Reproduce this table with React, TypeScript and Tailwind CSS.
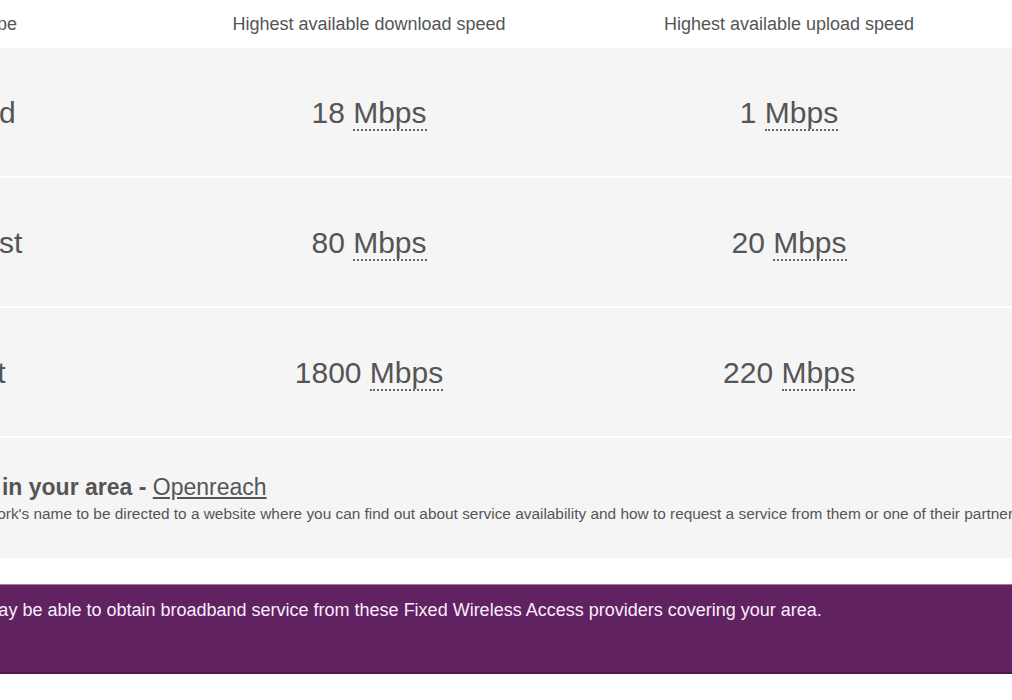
import React from "react";

const rows = [
    { type: "Standard", down: "18", up: "1" },
    { type: "Superfast", down: "80", up: "20" },
    { type: "Ultrafast", down: "1800", up: "220" },
];

const Speed = ({ value }: { value: string }) => (
    <span className="text-[30px] text-[#555]">
        {value}{" "}
        <abbr
            title="Megabits per second"
            className="no-underline inline-block leading-[32px] border-b-2 border-dotted border-[#666]"
        >
            Mbps
        </abbr>
    </span>
);

export default function App() {
    return (
        <div
            className="w-full h-[700px] overflow-hidden bg-white"
            style={{ fontFamily: '"Liberation Sans", Arial, sans-serif' }}
        >
            <div className="-ml-[120px] w-[1160px]">
                {/* table header */}
                <div className="grid grid-cols-[279px_420px_420px_1fr] h-12 items-center text-[18px] text-[#555]">
                    <div className="pl-[10px]">Broadband type</div>
                    <div className="text-center">Highest available download speed</div>
                    <div className="text-center">Highest available upload speed</div>
                    <div />
                </div>

                {rows.map((row) => (
                    <div
                        key={row.type}
                        className="grid grid-cols-[279px_420px_420px_1fr] h-[130px] items-center bg-[#f5f5f5] border-b-2 border-white"
                    >
                        <div className="pl-[14px] text-[30px] text-[#555]">{row.type}</div>
                        <div className="text-center">
                            <Speed value={row.down} />
                        </div>
                        <div className="text-center">
                            <Speed value={row.up} />
                        </div>
                        <div />
                    </div>
                ))}

                {/* networks */}
                <div className="bg-[#f5f5f5] h-[120px] pl-[12px] pt-[34px]">
                    <h3 className="text-[23px] leading-[30px] font-bold text-[#555]">
                        Networks in your area -{" "}
                        <a href="#" className="font-normal underline text-[#555]">
                            Openreach
                        </a>
                    </h3>
                    <p className="-ml-[12px] mt-[1px] text-[15.4px] leading-[22px] text-[#555] whitespace-nowrap">
                        Click on the network's name to be directed to a website where you can find out about service availability and how to request a service from them or one of their partners.
                    </p>
                </div>

                <div className="h-[26px]" />

                {/* fixed wireless */}
                <div className="bg-[#612262] h-[90px] border-t border-[#a77aa6] border-b-2 border-b-[#4e1a4d] pl-[68px] pt-[13px]">
                    <p className="text-[18px] leading-[24px] text-[#fbeefb]">
                        You may be able to obtain broadband service from these Fixed Wireless Access providers covering your area.
                    </p>
                </div>
            </div>
        </div>
    );
}
